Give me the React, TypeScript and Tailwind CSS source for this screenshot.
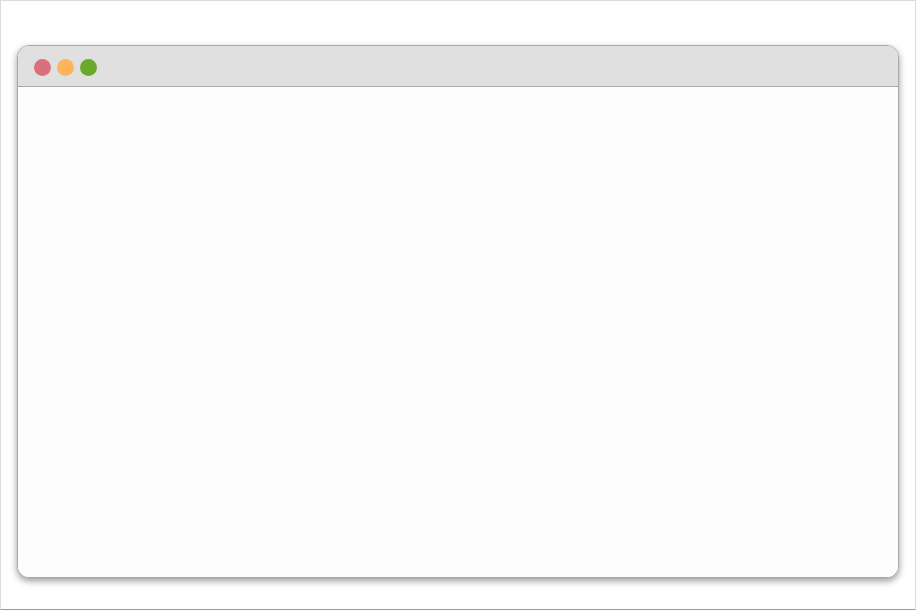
export default function App() {
  return (
    <div className="h-[610px] w-[916px] overflow-hidden border border-[#dcdcdc] border-b-[#9a9a9a] bg-white">
      <div className="px-[16px] pt-[44px]">
        <div className="flex h-[533px] w-[882px] flex-col overflow-hidden rounded-[12px] border border-[#a9a9a9] bg-[#fdfdfd] shadow-[0_3px_7px_rgba(0,0,0,0.4)]">
          <div className="flex h-[41px] shrink-0 items-center gap-[6px] border-b border-[#a9a9a9] bg-[#e0e0e0] px-[16px] pt-[2px]">
            <span className="h-[17px] w-[17px] rounded-full bg-[#d9707e]" />
            <span className="h-[17px] w-[17px] rounded-full bg-[#fdb55c]" />
            <span className="h-[17px] w-[17px] rounded-full bg-[#6aa92b]" />
          </div>
          <div className="flex-1 bg-[#fdfdfd]" />
        </div>
      </div>
    </div>
  );
}
